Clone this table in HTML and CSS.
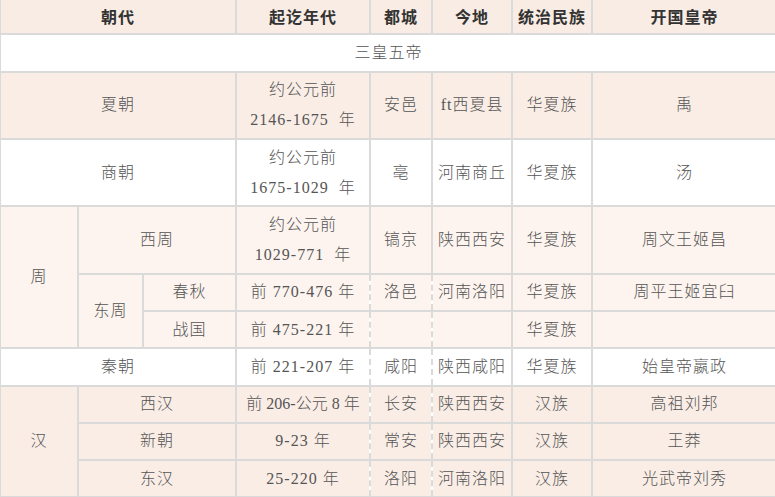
FILE: index.html
```html
<!DOCTYPE html>
<html lang="zh">
<head>
<meta charset="utf-8">
<title>中国朝代表</title>
<link rel="stylesheet" href="styles.css">
</head>
<body>
<table class="dyn">
  <colgroup>
    <col class="c1"><col class="c2"><col class="c3"><col class="c4"><col class="c5"><col class="c6"><col class="c7"><col class="c8">
  </colgroup>
  <thead>
    <tr class="hd">
      <th colspan="3">朝代</th><th>起讫年代</th><th>都城</th><th>今地</th><th>统治民族</th><th>开国皇帝</th>
    </tr>
  </thead>
  <tbody>
    <tr class="white">
      <td colspan="8">三皇五帝</td>
    </tr>
    <tr class="peach">
      <td colspan="3">夏朝</td><td>约公元前<br>2146-1675&nbsp; 年</td><td>安邑</td><td>ft西夏县</td><td>华夏族</td><td>禹</td>
    </tr>
    <tr class="white">
      <td colspan="3">商朝</td><td>约公元前<br>1675-1029&nbsp; 年</td><td>亳</td><td>河南商丘</td><td>华夏族</td><td>汤</td>
    </tr>
    <tr class="light">
      <td rowspan="3">周</td><td colspan="2">西周</td><td>约公元前<br>1029-771&nbsp; 年</td><td>镐京</td><td>陕西西安</td><td>华夏族</td><td>周文王姬昌</td>
    </tr>
    <tr class="light">
      <td rowspan="2">东周</td><td>春秋</td><td class="dr">前 770-476 年</td><td class="dl dr">洛邑</td><td class="dl">河南洛阳</td><td>华夏族</td><td>周平王姬宜臼</td>
    </tr>
    <tr class="light">
      <td>战国</td><td class="dr">前 475-221 年</td><td class="dl dr"></td><td class="dl"></td><td>华夏族</td><td></td>
    </tr>
    <tr class="white">
      <td colspan="3">秦朝</td><td class="dr">前 221-207 年</td><td class="dl dr">咸阳</td><td class="dl">陕西咸阳</td><td>华夏族</td><td>始皇帝嬴政</td>
    </tr>
    <tr class="peach">
      <td rowspan="3">汉</td><td colspan="2">西汉</td><td class="dr tight">前 206-公元 8 年</td><td class="dl dr">长安</td><td class="dl">陕西西安</td><td>汉族</td><td>高祖刘邦</td>
    </tr>
    <tr class="peach">
      <td colspan="2">新朝</td><td class="dr">9-23 年</td><td class="dl dr">常安</td><td class="dl">陕西西安</td><td>汉族</td><td>王莽</td>
    </tr>
    <tr class="peach">
      <td colspan="2">东汉</td><td class="dr">25-220 年</td><td class="dl dr">洛阳</td><td class="dl">河南洛阳</td><td>汉族</td><td>光武帝刘秀</td>
    </tr>
  </tbody>
</table>
</body>
</html>
```

FILE: styles.css
```css
html, body {
  margin: 0;
  padding: 0;
  background: #ffffff;
}

.dyn {
  table-layout: fixed;
  border-collapse: collapse;
  width: 777px;
  margin: -4px 0 0 -1px;
  font-family: "Liberation Serif", "Noto Sans CJK SC", serif;
  font-size: 16px;
  letter-spacing: 1px;
  color: #555555;
}

.c1 { width: 78px; }
.c2 { width: 65px; }
.c3 { width: 93px; }
.c4 { width: 134px; }
.c5 { width: 62px; }
.c6 { width: 80px; }
.c7 { width: 80px; }
.c8 { width: 185px; }

.dyn th,
.dyn td {
  border: 2px solid #dadada;
  padding: 2.67px 0;
  line-height: 30px;
  text-align: center;
  vertical-align: middle;
  white-space: nowrap;
  overflow: hidden;
}

.dyn th {
  font-family: "Noto Sans CJK SC", sans-serif;
  font-weight: bold;
  color: #333333;
}

.dyn td {
  font-weight: 300;
}

.hd { background: #f8ece4; }
.white { background: #ffffff; }
.peach { background: #f9ede6; }
.light { background: #fdf4ef; }

.dyn td.dr { border-right-style: dashed; }
.dyn td.dl { border-left-style: dashed; }
.dyn td.tight { letter-spacing: 0; }
```
